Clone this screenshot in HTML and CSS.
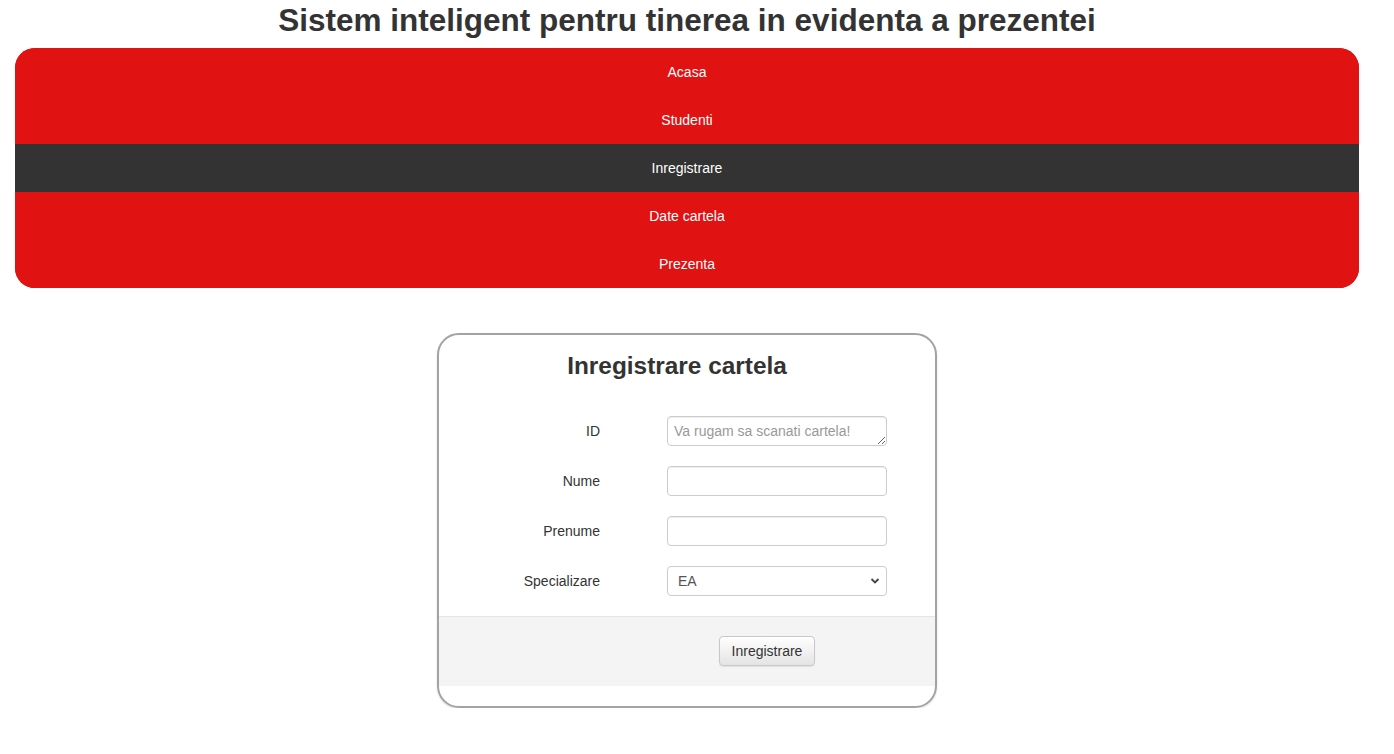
FILE: index.html
```html
<!DOCTYPE html>
<html>
<head>
<meta charset="utf-8">
<title>Inregistrare</title>
<link rel="stylesheet" href="styles.css">
</head>
<body>
<div class="page">
  <h1 class="site-title">Sistem inteligent pentru tinerea in evidenta a prezentei</h1>
  <nav class="nav">
    <a class="nav-item" href="#">Acasa</a>
    <a class="nav-item" href="#">Studenti</a>
    <a class="nav-item active" href="#">Inregistrare</a>
    <a class="nav-item" href="#">Date cartela</a>
    <a class="nav-item" href="#">Prezenta</a>
  </nav>
  <div class="card">
    <h3 class="card-title">Inregistrare cartela</h3>
    <form class="form">
      <div class="row">
        <label class="label">ID</label>
        <textarea class="control textarea" placeholder="Va rugam sa scanati cartela!"></textarea>
      </div>
      <div class="row">
        <label class="label">Nume</label>
        <input class="control" type="text">
      </div>
      <div class="row">
        <label class="label">Prenume</label>
        <input class="control" type="text">
      </div>
      <div class="row">
        <label class="label">Specializare</label>
        <div class="select">
          <span>EA</span>
          <svg class="chev" width="10" height="8" viewBox="0 0 10 8"><path d="M1.5 2 L5 5.5 L8.5 2" fill="none" stroke="#444" stroke-width="1.8"/></svg>
        </div>
      </div>
    </form>
    <div class="footer">
      <button class="btn" type="button">Inregistrare</button>
    </div>
  </div>
</div>
</body>
</html>
```

FILE: styles.css
```css
* { box-sizing: border-box; }
body {
  margin: 0;
  font-family: "Liberation Sans", Arial, sans-serif;
  color: #333;
  background: #fff;
}
.page {
  width: 1374px;
}
.site-title {
  margin: 0;
  padding-top: 2px;
  height: 48px;
  font-size: 31.5px;
  line-height: 36px;
  text-align: center;
  font-weight: bold;
  color: #333;
}
.nav {
  margin: 0 15px;
  display: flex;
  flex-direction: column;
  border-radius: 20px;
  overflow: hidden;
  background: #e01212;
}
.nav-item {
  display: block;
  height: 48px;
  line-height: 48px;
  text-align: center;
  font-size: 14px;
  color: #fff;
  text-decoration: none;
  background: #e01212;
}
.nav-item.active {
  background: #333;
}
.card {
  width: 500px;
  margin: 45px auto 0;
  border: 2px solid #a3a3a3;
  border-radius: 22px;
  overflow: hidden;
  padding-bottom: 20px;
  box-shadow: 0 1px 2px rgba(0,0,0,0.15);
}
.card-title {
  margin: 17px 0 0;
  padding-right: 20px;
  font-size: 24.4px;
  line-height: 28px;
  text-align: center;
  font-weight: bold;
  color: #333;
}
.form {
  padding-top: 36px;
}
.row {
  display: grid;
  grid-template-columns: 161px 220px;
  column-gap: 67px;
  align-items: center;
  height: 30px;
  margin-bottom: 20px;
}
.label {
  text-align: right;
  font-size: 14px;
  color: #333;
}
.control {
  display: block;
  width: 220px;
  height: 30px;
  border: 1px solid #ccc;
  border-radius: 4px;
  padding: 5px 6px;
  font-family: "Liberation Sans", Arial, sans-serif;
  font-size: 14px;
  color: #555;
  background: #fff;
  box-shadow: inset 0 1px 1px rgba(0,0,0,0.075);
  margin: 0;
  outline: none;
}
.textarea {
  resize: vertical;
  line-height: 18px;
  padding-top: 5px;
  overflow: hidden;
}
.textarea::placeholder { color: #999; }
.select {
  display: flex;
  align-items: center;
  justify-content: space-between;
  width: 220px;
  height: 30px;
  border: 1px solid #ccc;
  border-radius: 4px;
  padding: 0 6px 0 10px;
  font-size: 14px;
  color: #555;
  background: #fff;
}
.chev { display: block; }
.footer {
  background: #f4f4f4;
  border-top: 1px solid #e5e5e5;
  height: 70px;
  padding: 19px 0 0 280px;
}
.btn {
  width: 96px;
  height: 30px;
  font-family: "Liberation Sans", Arial, sans-serif;
  font-size: 14px;
  color: #333;
  border: 1px solid #c8c8c8;
  border-radius: 4px;
  background: linear-gradient(#fff, #e4e4e4);
  box-shadow: 0 1px 1px rgba(0,0,0,0.08);
  padding: 0;
}
```
